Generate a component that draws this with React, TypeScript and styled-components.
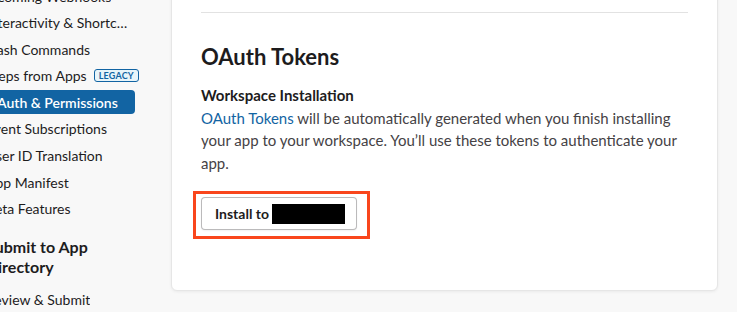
import React from "react";
import styled, { createGlobalStyle } from "styled-components";

const GlobalStyle = createGlobalStyle`
  html, body {
    margin: 0;
    padding: 0;
    background: #f8f8f8;
    font-family: Lato, "Noto Sans", "Liberation Sans", sans-serif;
    color: #1d1c1d;
    -webkit-font-smoothing: antialiased;
  }
`;

const Page = styled.div`
  display: flex;
  width: 737px;
  height: 312px;
  overflow: hidden;
`;

const Sidebar = styled.nav`
  width: 150px;
  flex-shrink: 0;
  overflow: hidden;
`;

const SideList = styled.div`
  display: flex;
  flex-direction: column;
  gap: 2.6px;
  width: 159px;
  margin-left: -24px;
  margin-top: -16px;
`;

const NavItem = styled.a<{ $active?: boolean }>`
  display: flex;
  align-items: center;
  gap: 7px;
  height: 24px;
  padding: 0 10px;
  border-radius: 4px;
  font-size: 14px;
  white-space: nowrap;
  color: ${(p) => (p.$active ? "#fff" : "#1d1c1d")};
  background: ${(p) => (p.$active ? "#1264a3" : "transparent")};
  font-weight: ${(p) => (p.$active ? 600 : 400)};
`;

const NavLabel = styled.span`
  flex-shrink: 0;
  max-width: 146px;
  overflow: hidden;
  text-overflow: ellipsis;
`;

const Legacy = styled.span`
  flex-shrink: 0;
  display: inline-flex;
  align-items: center;
  height: 11px;
  padding: 0 4px;
  border: 1px solid #1264a3;
  border-radius: 3px;
  background: #e8f5fa;
  color: #1264a3;
  font-size: 9px;
  font-weight: 700;
  letter-spacing: 0.2px;
`;

const SideHeading = styled.div`
  margin: 13.5px 0 8.5px;
  padding: 0 10px;
  font-size: 16px;
  line-height: 20px;
  font-weight: 700;
`;

const Main = styled.main`
  flex: 1;
  padding: 0 19px 0 21px;
`;

const Card = styled.section`
  margin-top: -18px;
  padding: 29px 29px 51px;
  background: #fff;
  border: 1px solid #e6e6e6;
  border-radius: 6px;
  box-shadow: 0 1px 3px rgba(0, 0, 0, 0.06);
`;

const Divider = styled.div`
  border-top: 1px solid #e2e2e2;
  margin-bottom: 29px;
`;

const Heading = styled.h2`
  margin: 0 0 12px;
  font-size: 22px;
  line-height: 30px;
  font-weight: 700;
`;

const SubHeading = styled.h3`
  margin: 0;
  font-size: 15px;
  line-height: 22.5px;
  font-weight: 700;
`;

const Body = styled.p`
  margin: 0 0 17px;
  font-size: 15px;
  line-height: 22.5px;
  color: #454245;
`;

const Link = styled.a`
  color: #1264a3;
  text-decoration: none;
`;

const Highlight = styled.div`
  display: flex;
  width: fit-content;
  margin-left: -8px;
  padding: 3px 10px 6px 5px;
  border: 3px solid #f9461c;
`;

const Button = styled.button`
  display: flex;
  align-items: center;
  gap: 3px;
  height: 33px;
  padding: 0 11px 0 13px;
  background: #fff;
  border: 1px solid rgba(29, 28, 29, 0.3);
  border-radius: 4px;
  box-shadow: 0 1px 2px rgba(0, 0, 0, 0.06);
  font-family: inherit;
  font-size: 14px;
  font-weight: 700;
  color: #1d1c1d;
`;

const Redacted = styled.span`
  display: inline-block;
  width: 73px;
  height: 20px;
  background: #000;
`;

const navItems = [
  "Incoming Webhooks",
  "Interactivity & Shortcuts",
  "Slash Commands",
  "Steps from Apps",
  "OAuth & Permissions",
  "Event Subscriptions",
  "User ID Translation",
  "App Manifest",
  "Beta Features",
];

export default function App() {
  return (
    <>
      <GlobalStyle />
      <Page>
        <Sidebar>
          <SideList>
            {navItems.map((label) => (
              <NavItem key={label} $active={label === "OAuth & Permissions"}>
                <NavLabel>{label}</NavLabel>
                {label === "Steps from Apps" && <Legacy>LEGACY</Legacy>}
              </NavItem>
            ))}
            <SideHeading>Submit to App Directory</SideHeading>
            <NavItem>
              <NavLabel>Review &amp; Submit</NavLabel>
            </NavItem>
          </SideList>
        </Sidebar>
        <Main>
          <Card>
            <Divider />
            <Heading>OAuth Tokens</Heading>
            <SubHeading>Workspace Installation</SubHeading>
            <Body>
              <Link>OAuth Tokens</Link> will be automatically generated when you
              finish installing your app to your workspace. You’ll use these
              tokens to authenticate your app.
            </Body>
            <Highlight>
              <Button>
                Install to <Redacted />
              </Button>
            </Highlight>
          </Card>
        </Main>
      </Page>
    </>
  );
}
